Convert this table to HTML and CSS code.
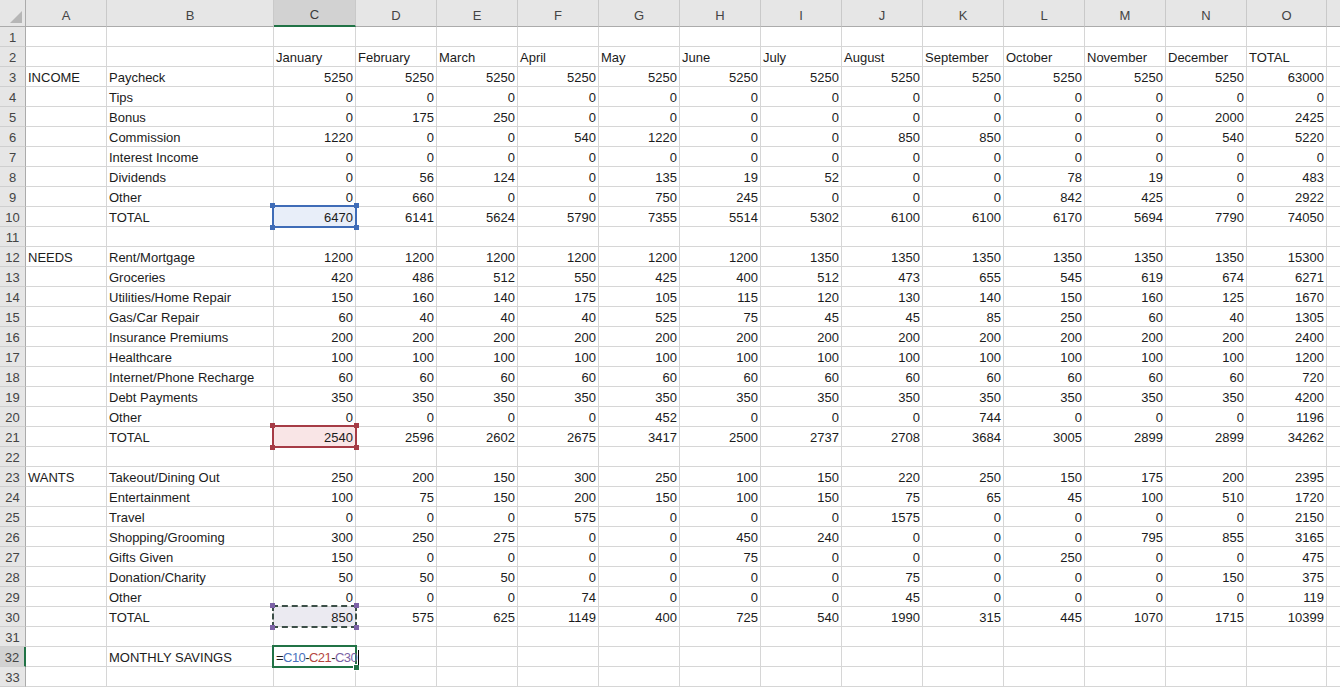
FILE: index.html
```html
<!DOCTYPE html>
<html lang="en">
<head>
<meta charset="utf-8">
<title>Budget</title>
<link rel="stylesheet" href="styles.css">
</head>
<body>
<table class="sheet">
<colgroup><col class="c-rh"><col class="c-a"><col class="c-b"><col class="c-c"><col class="c-m" span="11"><col class="c-o"><col class="c-f"></colgroup>
<thead>
<tr><th class="corner"><span class="tri"></span></th><th>A</th><th>B</th><th class="selc">C</th><th>D</th><th>E</th><th>F</th><th>G</th><th>H</th><th>I</th><th>J</th><th>K</th><th>L</th><th>M</th><th>N</th><th>O</th><th class="fill"></th></tr>
</thead>
<tbody>
<tr><th>1</th><td></td><td></td><td></td><td></td><td></td><td></td><td></td><td></td><td></td><td></td><td></td><td></td><td></td><td></td><td></td><td class="fill"></td></tr>
<tr class="months"><th>2</th><td></td><td></td><td>January</td><td>February</td><td>March</td><td>April</td><td>May</td><td>June</td><td>July</td><td>August</td><td>September</td><td>October</td><td>November</td><td>December</td><td>TOTAL</td><td class="fill"></td></tr>
<tr><th>3</th><td>INCOME</td><td>Paycheck</td><td>5250</td><td>5250</td><td>5250</td><td>5250</td><td>5250</td><td>5250</td><td>5250</td><td>5250</td><td>5250</td><td>5250</td><td>5250</td><td>5250</td><td>63000</td><td class="fill"></td></tr>
<tr><th>4</th><td></td><td>Tips</td><td>0</td><td>0</td><td>0</td><td>0</td><td>0</td><td>0</td><td>0</td><td>0</td><td>0</td><td>0</td><td>0</td><td>0</td><td>0</td><td class="fill"></td></tr>
<tr><th>5</th><td></td><td>Bonus</td><td>0</td><td>175</td><td>250</td><td>0</td><td>0</td><td>0</td><td>0</td><td>0</td><td>0</td><td>0</td><td>0</td><td>2000</td><td>2425</td><td class="fill"></td></tr>
<tr><th>6</th><td></td><td>Commission</td><td>1220</td><td>0</td><td>0</td><td>540</td><td>1220</td><td>0</td><td>0</td><td>850</td><td>850</td><td>0</td><td>0</td><td>540</td><td>5220</td><td class="fill"></td></tr>
<tr><th>7</th><td></td><td>Interest Income</td><td>0</td><td>0</td><td>0</td><td>0</td><td>0</td><td>0</td><td>0</td><td>0</td><td>0</td><td>0</td><td>0</td><td>0</td><td>0</td><td class="fill"></td></tr>
<tr><th>8</th><td></td><td>Dividends</td><td>0</td><td>56</td><td>124</td><td>0</td><td>135</td><td>19</td><td>52</td><td>0</td><td>0</td><td>78</td><td>19</td><td>0</td><td>483</td><td class="fill"></td></tr>
<tr><th>9</th><td></td><td>Other</td><td>0</td><td>660</td><td>0</td><td>0</td><td>750</td><td>245</td><td>0</td><td>0</td><td>0</td><td>842</td><td>425</td><td>0</td><td>2922</td><td class="fill"></td></tr>
<tr><th>10</th><td></td><td>TOTAL</td><td class="ref ref-blue">6470<span class="box box-blue"><i class="tl"></i><i class="tr"></i><i class="bl"></i><i class="br"></i></span></td><td>6141</td><td>5624</td><td>5790</td><td>7355</td><td>5514</td><td>5302</td><td>6100</td><td>6100</td><td>6170</td><td>5694</td><td>7790</td><td>74050</td><td class="fill"></td></tr>
<tr><th>11</th><td></td><td></td><td></td><td></td><td></td><td></td><td></td><td></td><td></td><td></td><td></td><td></td><td></td><td></td><td></td><td class="fill"></td></tr>
<tr><th>12</th><td>NEEDS</td><td>Rent/Mortgage</td><td>1200</td><td>1200</td><td>1200</td><td>1200</td><td>1200</td><td>1200</td><td>1350</td><td>1350</td><td>1350</td><td>1350</td><td>1350</td><td>1350</td><td>15300</td><td class="fill"></td></tr>
<tr><th>13</th><td></td><td>Groceries</td><td>420</td><td>486</td><td>512</td><td>550</td><td>425</td><td>400</td><td>512</td><td>473</td><td>655</td><td>545</td><td>619</td><td>674</td><td>6271</td><td class="fill"></td></tr>
<tr><th>14</th><td></td><td>Utilities/Home Repair</td><td>150</td><td>160</td><td>140</td><td>175</td><td>105</td><td>115</td><td>120</td><td>130</td><td>140</td><td>150</td><td>160</td><td>125</td><td>1670</td><td class="fill"></td></tr>
<tr><th>15</th><td></td><td>Gas/Car Repair</td><td>60</td><td>40</td><td>40</td><td>40</td><td>525</td><td>75</td><td>45</td><td>45</td><td>85</td><td>250</td><td>60</td><td>40</td><td>1305</td><td class="fill"></td></tr>
<tr><th>16</th><td></td><td>Insurance Premiums</td><td>200</td><td>200</td><td>200</td><td>200</td><td>200</td><td>200</td><td>200</td><td>200</td><td>200</td><td>200</td><td>200</td><td>200</td><td>2400</td><td class="fill"></td></tr>
<tr><th>17</th><td></td><td>Healthcare</td><td>100</td><td>100</td><td>100</td><td>100</td><td>100</td><td>100</td><td>100</td><td>100</td><td>100</td><td>100</td><td>100</td><td>100</td><td>1200</td><td class="fill"></td></tr>
<tr><th>18</th><td></td><td>Internet/Phone Recharge</td><td>60</td><td>60</td><td>60</td><td>60</td><td>60</td><td>60</td><td>60</td><td>60</td><td>60</td><td>60</td><td>60</td><td>60</td><td>720</td><td class="fill"></td></tr>
<tr><th>19</th><td></td><td>Debt Payments</td><td>350</td><td>350</td><td>350</td><td>350</td><td>350</td><td>350</td><td>350</td><td>350</td><td>350</td><td>350</td><td>350</td><td>350</td><td>4200</td><td class="fill"></td></tr>
<tr><th>20</th><td></td><td>Other</td><td>0</td><td>0</td><td>0</td><td>0</td><td>452</td><td>0</td><td>0</td><td>0</td><td>744</td><td>0</td><td>0</td><td>0</td><td>1196</td><td class="fill"></td></tr>
<tr><th>21</th><td></td><td>TOTAL</td><td class="ref ref-red">2540<span class="box box-red"><i class="tl"></i><i class="tr"></i><i class="bl"></i><i class="br"></i></span></td><td>2596</td><td>2602</td><td>2675</td><td>3417</td><td>2500</td><td>2737</td><td>2708</td><td>3684</td><td>3005</td><td>2899</td><td>2899</td><td>34262</td><td class="fill"></td></tr>
<tr><th>22</th><td></td><td></td><td></td><td></td><td></td><td></td><td></td><td></td><td></td><td></td><td></td><td></td><td></td><td></td><td></td><td class="fill"></td></tr>
<tr><th>23</th><td>WANTS</td><td>Takeout/Dining Out</td><td>250</td><td>200</td><td>150</td><td>300</td><td>250</td><td>100</td><td>150</td><td>220</td><td>250</td><td>150</td><td>175</td><td>200</td><td>2395</td><td class="fill"></td></tr>
<tr><th>24</th><td></td><td>Entertainment</td><td>100</td><td>75</td><td>150</td><td>200</td><td>150</td><td>100</td><td>150</td><td>75</td><td>65</td><td>45</td><td>100</td><td>510</td><td>1720</td><td class="fill"></td></tr>
<tr><th>25</th><td></td><td>Travel</td><td>0</td><td>0</td><td>0</td><td>575</td><td>0</td><td>0</td><td>0</td><td>1575</td><td>0</td><td>0</td><td>0</td><td>0</td><td>2150</td><td class="fill"></td></tr>
<tr><th>26</th><td></td><td>Shopping/Grooming</td><td>300</td><td>250</td><td>275</td><td>0</td><td>0</td><td>450</td><td>240</td><td>0</td><td>0</td><td>0</td><td>795</td><td>855</td><td>3165</td><td class="fill"></td></tr>
<tr><th>27</th><td></td><td>Gifts Given</td><td>150</td><td>0</td><td>0</td><td>0</td><td>0</td><td>75</td><td>0</td><td>0</td><td>0</td><td>250</td><td>0</td><td>0</td><td>475</td><td class="fill"></td></tr>
<tr><th>28</th><td></td><td>Donation/Charity</td><td>50</td><td>50</td><td>50</td><td>0</td><td>0</td><td>0</td><td>0</td><td>75</td><td>0</td><td>0</td><td>0</td><td>150</td><td>375</td><td class="fill"></td></tr>
<tr><th>29</th><td></td><td>Other</td><td>0</td><td>0</td><td>0</td><td>74</td><td>0</td><td>0</td><td>0</td><td>45</td><td>0</td><td>0</td><td>0</td><td>0</td><td>119</td><td class="fill"></td></tr>
<tr><th>30</th><td></td><td>TOTAL</td><td class="ref ref-copy">850<span class="box box-copy"><i class="tl"></i><i class="tr"></i><i class="bl"></i><i class="br"></i></span></td><td>575</td><td>625</td><td>1149</td><td>400</td><td>725</td><td>540</td><td>1990</td><td>315</td><td>445</td><td>1070</td><td>1715</td><td>10399</td><td class="fill"></td></tr>
<tr><th>31</th><td></td><td></td><td></td><td></td><td></td><td></td><td></td><td></td><td></td><td></td><td></td><td></td><td></td><td></td><td></td><td class="fill"></td></tr>
<tr><th class="selr">32</th><td></td><td>MONTHLY SAVINGS</td><td class="ref edit"><span class="formula">=<span class="f-blue">C10</span>-<span class="f-red">C21</span>-<span class="f-purple">C30</span><span class="caret"></span></span><span class="box box-active"><i class="fh"></i></span></td><td></td><td></td><td></td><td></td><td></td><td></td><td></td><td></td><td></td><td></td><td></td><td></td><td class="fill"></td></tr>
<tr><th>33</th><td></td><td></td><td></td><td></td><td></td><td></td><td></td><td></td><td></td><td></td><td></td><td></td><td></td><td></td><td></td><td class="fill"></td></tr>
</tbody>
</table>
</body>
</html>
```
FILE: styles.css
```css
* { box-sizing: border-box; }
html, body { margin: 0; padding: 0; background: #ffffff; }
body {
  font-family: "Liberation Sans", Arial, sans-serif;
  font-size: 13px;
  color: #1b1b1b;
  overflow: hidden;
  width: 1340px;
  height: 688px;
}
.sheet {
  border-collapse: separate;
  border-spacing: 0;
  table-layout: fixed;
  width: 1340px;
}
.c-rh { width: 26px; }
.c-a { width: 81px; }
.c-b { width: 167px; }
.c-c { width: 82px; }
.c-m { width: 81px; }
.c-o { width: 80px; }
.c-f { width: 13px; }

thead th {
  height: 27px;
  background: #e6e6e6;
  border-right: 1px solid #c9c9c9;
  border-bottom: 1px solid #ababab;
  color: #444444;
  font-weight: normal;
  font-size: 13px;
  text-align: center;
  vertical-align: middle;
  padding: 4px 0 0 0;
}
thead th.selc {
  background: #d2d2d2;
  border-bottom: 2px solid #217346;
  color: #3a3a3a;
}
thead th.fill { border-right: 0; }
th.corner { position: relative; border-right: 1px solid #ababab; }
.tri {
  position: absolute;
  right: 3px;
  bottom: 3px;
  width: 12px;
  height: 12px;
  background: #b6b6b6;
  clip-path: polygon(100% 0, 100% 100%, 0 100%);
}

tbody th {
  height: 20px;
  background: #e6e6e6;
  border-right: 1px solid #ababab;
  border-bottom: 1px solid #cfcfcf;
  color: #444444;
  font-weight: normal;
  font-size: 13px;
  text-align: center;
  vertical-align: bottom;
  line-height: 17px;
  padding: 2px 0 0 0;
}
tbody th.selr {
  background: #d2d2d2;
  border-right: 2px solid #217346;
}

td {
  height: 20px;
  padding: 2px 2px 0 2px;
  border-right: 1px solid #d6d6d6;
  border-bottom: 1px solid #d6d6d6;
  line-height: 17px;
  vertical-align: bottom;
  white-space: nowrap;
  overflow: hidden;
  text-align: left;
}
td:nth-child(n+4) { text-align: right; }
.months td { text-align: left; }
td.fill { border-right: 0; }

td.ref { position: relative; overflow: visible; }
td.ref-blue { background: #e8eef9; }
td.ref-red { background: #f9e5e6; }
td.ref-copy { background: #ebeaf1; }

.box {
  position: absolute;
  left: -2px;
  top: -2px;
  width: 85px;
  height: 23px;
  border: 2px solid;
  z-index: 2;
  pointer-events: none;
}
.box i {
  position: absolute;
  width: 5px;
  height: 5px;
  background: currentColor;
}
.box .tl { left: -4px; top: -4px; }
.box .tr { right: -4px; top: -4px; }
.box .bl { left: -4px; bottom: -4px; }
.box .br { right: -4px; bottom: -4px; }
.box-blue { color: #3f6cb7; border-color: #3f6cb7; }
.box-red { color: #a63c46; border-color: #a63c46; }
.box-copy { color: #7d62a7; border: 2px dashed #3c4f48; }
.box-active { border-color: #217346; }
.box .fh {
  right: -5px;
  bottom: -5px;
  width: 7px;
  height: 7px;
  background: #217346;
  border: 1px solid #ffffff;
}

td.edit { text-align: left; padding-left: 2px; }
.formula { position: relative; z-index: 3; letter-spacing: -0.55px; }
.f-blue { color: #4a73bd; }
.f-red { color: #b5463f; }
.f-purple { color: #7a62a5; }
.caret {
  display: inline-block;
  width: 1px;
  height: 15px;
  background: #000000;
  vertical-align: -3px;
  margin-left: 1px;
}
```
